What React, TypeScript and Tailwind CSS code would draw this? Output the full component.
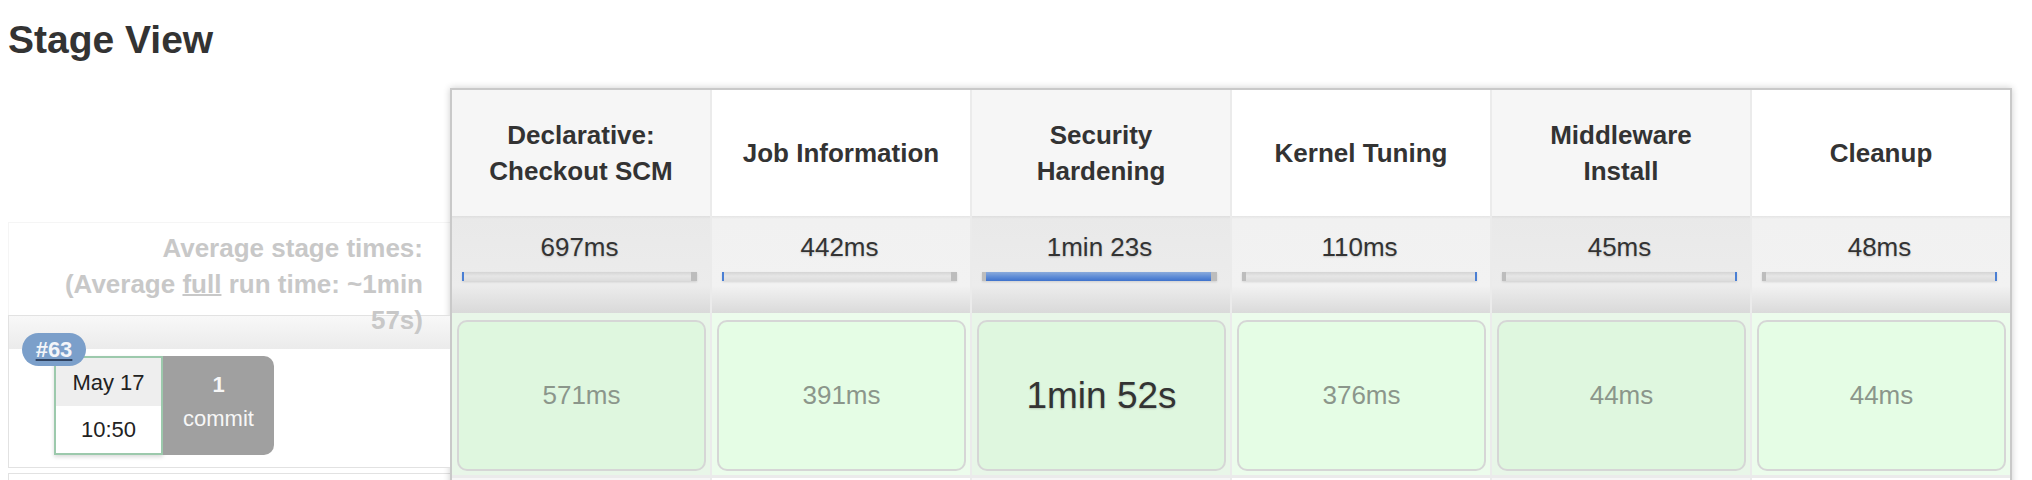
import React from 'react';

type BarMode = 'left' | 'full' | 'right';

interface Stage {
  name: string[];
  avg: string;
  bar: BarMode;
  run: string;
  long?: boolean;
}

const stages: Stage[] = [
  { name: ['Declarative:', 'Checkout SCM'], avg: '697ms', bar: 'left', run: '571ms' },
  { name: ['Job Information'], avg: '442ms', bar: 'left', run: '391ms' },
  { name: ['Security', 'Hardening'], avg: '1min 23s', bar: 'full', run: '1min 52s', long: true },
  { name: ['Kernel Tuning'], avg: '110ms', bar: 'right', run: '376ms' },
  { name: ['Middleware', 'Install'], avg: '45ms', bar: 'right', run: '44ms' },
  { name: ['Cleanup'], avg: '48ms', bar: 'right', run: '44ms' },
];

function ProgressBar({ mode }: { mode: BarMode }) {
  return (
    <div className="flex h-[9px] w-full bg-[linear-gradient(to_bottom,#d4d4d4,#e6e6e6_45%,#dcdcdc)] shadow-[0_1px_2px_rgba(0,0,0,0.12)]">
      {mode === 'left' && <div className="w-[2px] bg-[#4a7fd4]" />}
      {mode !== 'left' && <div className="w-[4px] bg-[#bdbdbd]" />}
      {mode === 'full' ? (
        <div className="flex-1 bg-[linear-gradient(to_bottom,#8aabdc,#5d8bd6_55%,#3f72cc)]" />
      ) : (
        <div className="flex-1" />
      )}
      {mode === 'right' && <div className="w-[2px] bg-[#4a7fd4]" />}
      {mode !== 'right' && <div className="w-[6px] bg-[#bdbdbd]" />}
    </div>
  );
}

function BuildRow() {
  return (
    <div className="relative h-[153px] border border-r-0 border-[#e2e2e2] bg-white bg-[linear-gradient(to_bottom,#f8f8f8,#ebebeb)] bg-no-repeat bg-[length:100%_33px] pl-[45px] pt-[40px]">
      <div className="flex">
        <div className="flex h-[99px] w-[109px] flex-col border-2 border-[#9cc9ac] bg-white text-[22px] text-[#222] shadow-[0_2px_4px_rgba(0,0,0,0.15)]">
          <div className="flex h-[48px] items-center justify-center bg-[#eeeeee]">May 17</div>
          <div className="flex flex-1 items-center justify-center">10:50</div>
        </div>
        <div className="flex h-[99px] w-[111px] flex-col items-center justify-center rounded-r-[10px] bg-[#a0a0a0] pb-[8px] text-[22px] leading-[34px] text-[#f7f7f7]">
          <span className="font-bold">1</span>
          <span>commit</span>
        </div>
      </div>
      <a className="absolute left-[13px] top-[17px] flex h-[33px] w-[64px] items-center justify-center rounded-full bg-[#7b9fca] text-[22px] font-bold text-[#f3f5f9] underline decoration-[#2f4260] decoration-2 underline-offset-2">
        #63
      </a>
    </div>
  );
}

export default function App() {
  return (
    <div className="min-h-[480px] bg-white pl-2 font-['Liberation_Sans',Arial,sans-serif] text-[#333]">
      <h2 className="mt-[18px] text-[39px] font-bold leading-[44px]">Stage View</h2>

      <div className="mt-[26px] flex items-start">
        {/* left column: averages + build rows */}
        <div className="w-[442px] shrink-0 pt-[134px]">
          <div className="h-[93px] border-l border-t border-[#f5f5f5] pr-[27px] pt-[7px] text-right text-[26px] font-bold leading-[36px] text-[#c8c8c8]">
            <div className="relative z-10">
              Average stage times:
              <br />
              (Average <span className="underline decoration-2">full</span> run time: ~1min
              <br />
              57s)
            </div>
          </div>
          <BuildRow />
          <div className="mt-[5px] h-[20px] border border-r-0 border-[#e2e2e2]" />
        </div>

        {/* stage table */}
        <div className="border-2 border-[#c9c9c9] shadow-[0_0_7px_rgba(0,0,0,0.2)]">
          <div className="grid grid-cols-[repeat(6,258px)] gap-x-[2px] bg-[#ebebeb]">
            {stages.map((s, i) => (
              <div
                key={`h-${i}`}
                className={`flex h-[126px] flex-col items-center justify-center px-5 text-center text-[26px] font-bold leading-[36px] text-[#333] ${
                  i % 2 === 0 ? 'bg-[#f6f6f6]' : 'bg-white'
                }`}
              >
                {s.name.map((line) => (
                  <span key={line}>{line}</span>
                ))}
              </div>
            ))}
            {stages.map((s, i) => (
              <div
                key={`a-${i}`}
                className={`h-[97px] pl-[10px] pr-[13px] pt-[16px] text-center ${
                  i % 2 === 0
                    ? 'bg-[linear-gradient(to_bottom,#dedede_0px,#e9e9e9_3px,#ececec_72%,#d9d9d9_100%)]'
                    : 'bg-[linear-gradient(to_bottom,#e4e4e4_0px,#f1f1f1_3px,#f2f2f2_72%,#dadada_100%)]'
                }`}
              >
                <div className="text-[26px] leading-[30px] text-[#333] [text-shadow:0_1px_2px_rgba(0,0,0,0.18)]">
                  {s.avg}
                </div>
                <div className="mt-[10px]">
                  <ProgressBar mode={s.bar} />
                </div>
              </div>
            ))}
            {stages.map((s, i) => (
              <div
                key={`r-${i}`}
                className={`h-[162px] pb-[4px] pl-[5px] pr-[4px] pt-[7px] ${
                  i % 2 === 0 ? 'bg-[#e8f6e8]' : 'bg-[#ecfcec]'
                }`}
              >
                <div
                  className={`flex h-full items-center justify-center rounded-[10px] border-2 border-[#d6d6d6] ${
                    i % 2 === 0 ? 'bg-[#dff7df]' : 'bg-[#e5fde5]'
                  }`}
                >
                  {s.long ? (
                    <span className="text-[37px] text-[#333] [text-shadow:0_1px_2px_rgba(0,0,0,0.18)]">
                      {s.run}
                    </span>
                  ) : (
                    <span className="text-[26px] text-[#8b968b]">{s.run}</span>
                  )}
                </div>
              </div>
            ))}
            {stages.map((s, i) => (
              <div
                key={`n-${i}`}
                className={`mt-[3px] h-[20px] ${i % 2 === 0 ? 'bg-[#f6f6f6]' : 'bg-white'}`}
              />
            ))}
          </div>
        </div>
      </div>
    </div>
  );
}
